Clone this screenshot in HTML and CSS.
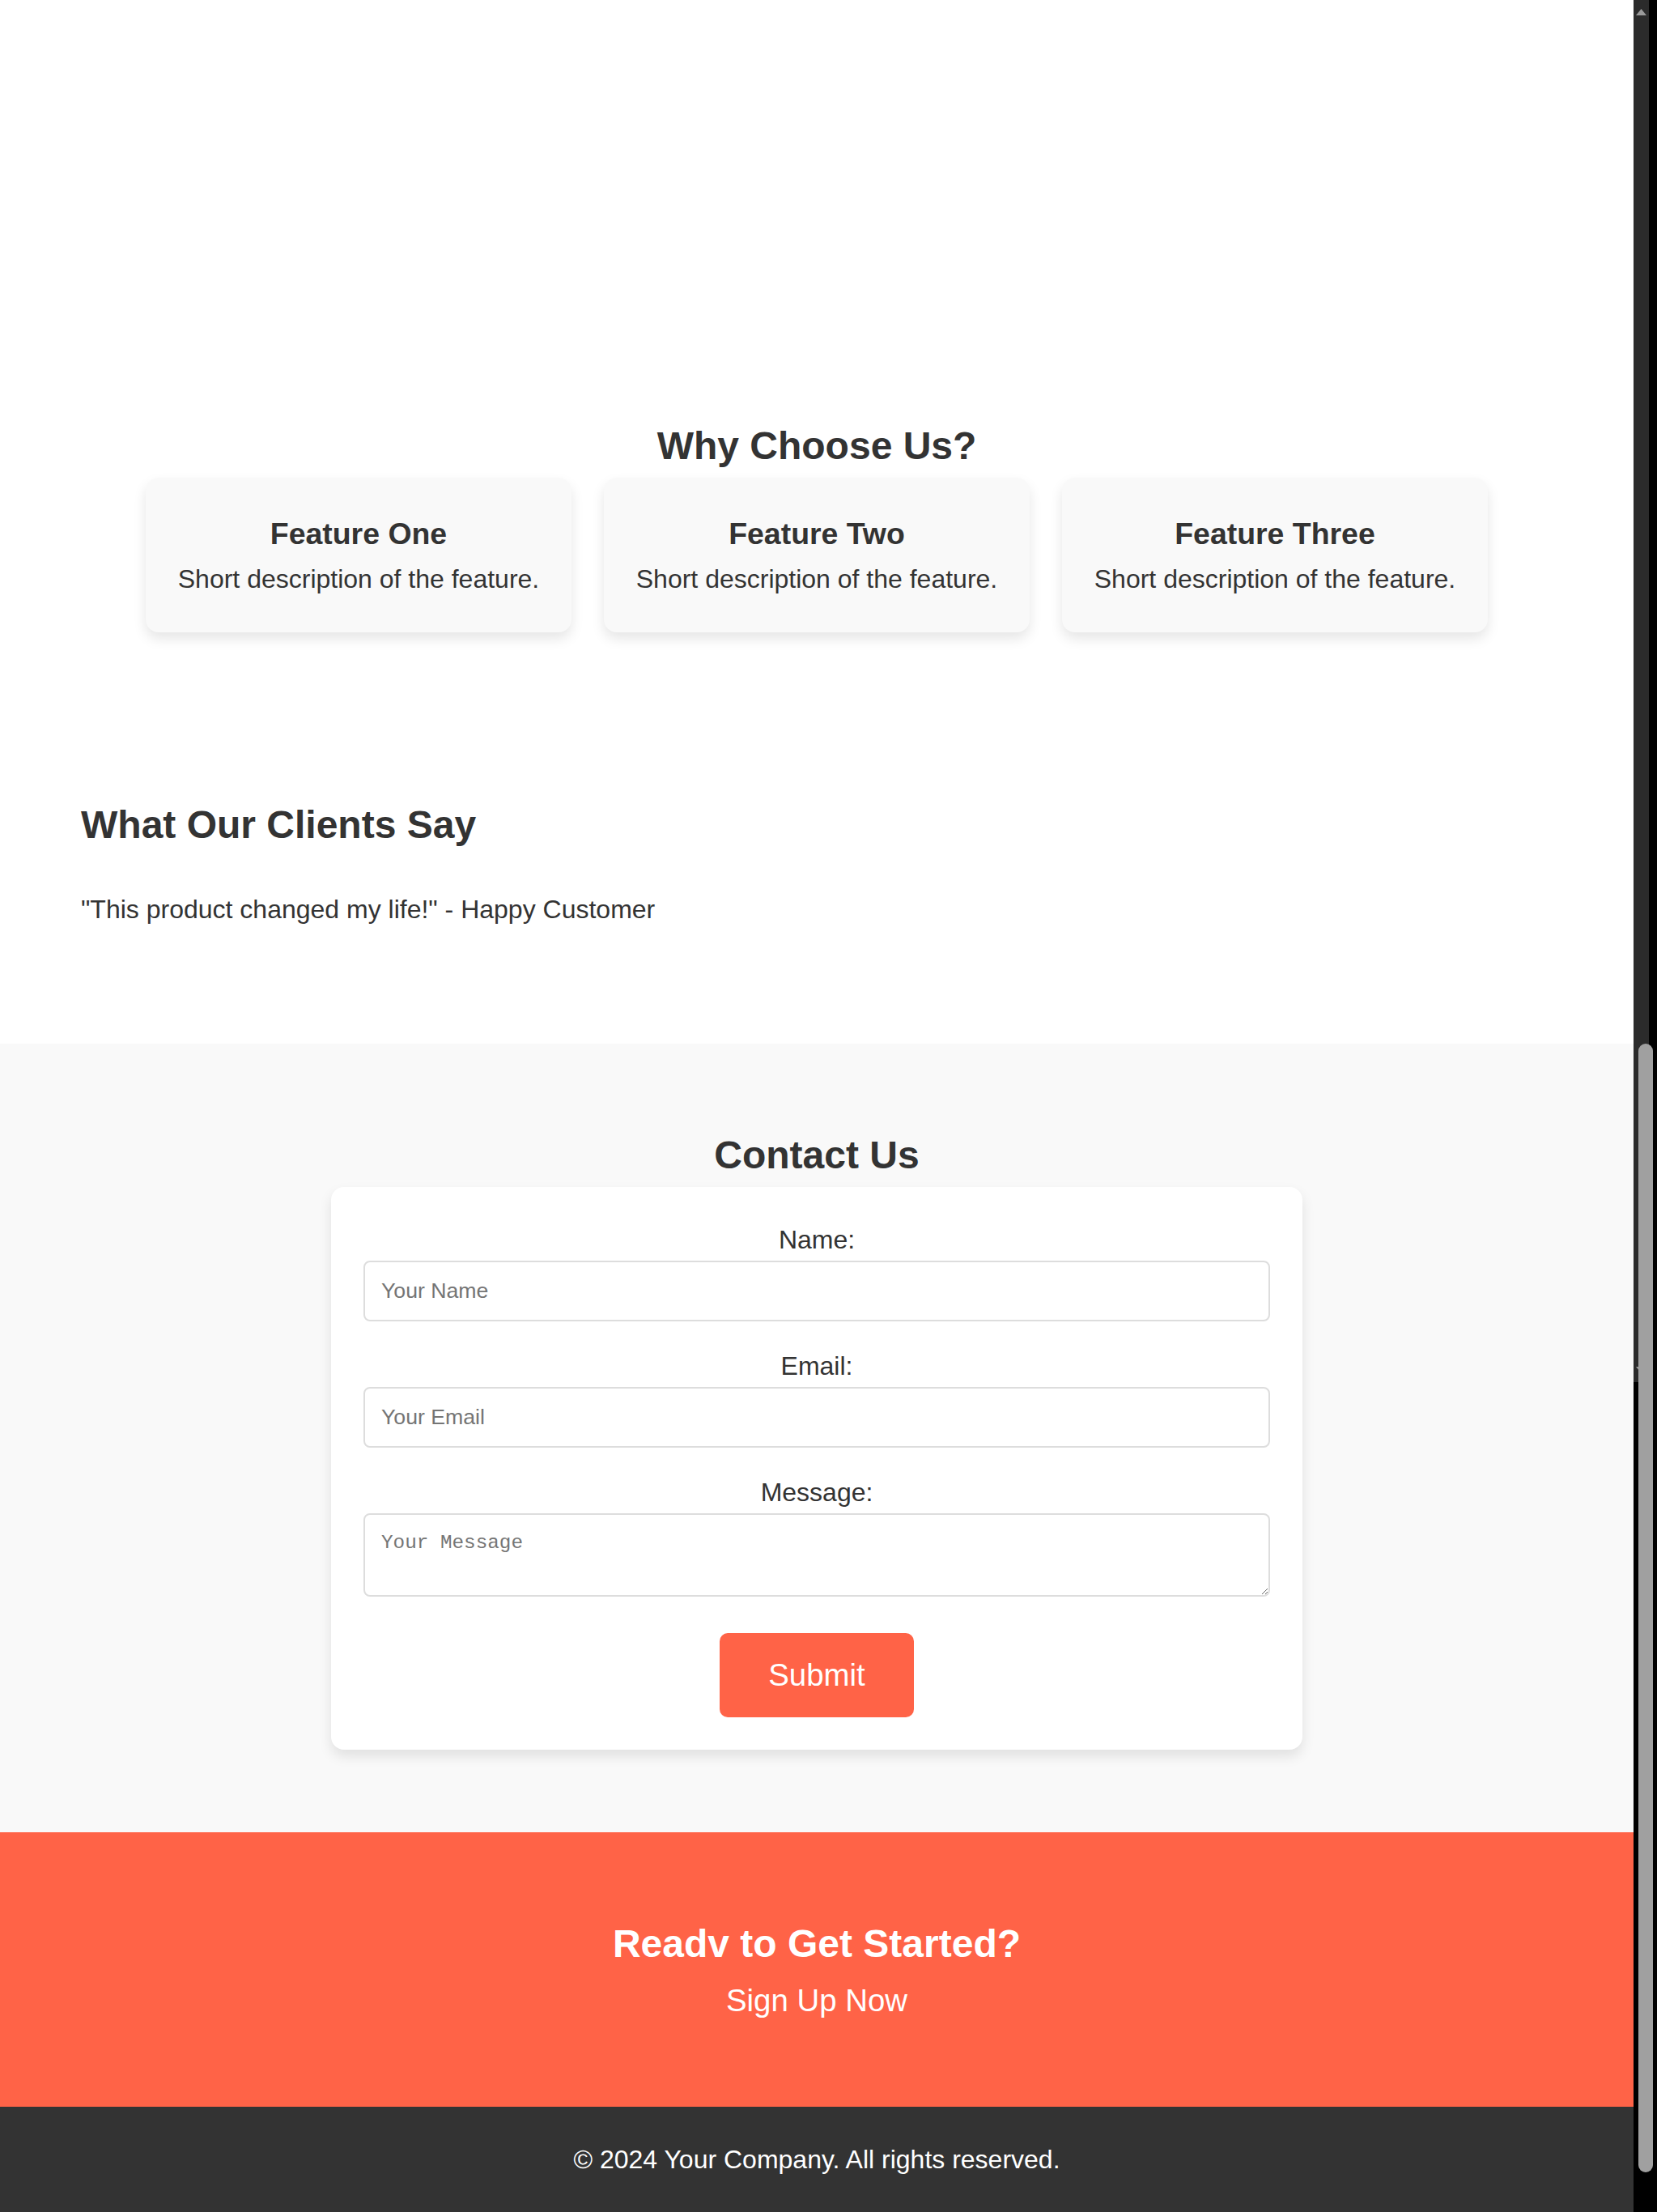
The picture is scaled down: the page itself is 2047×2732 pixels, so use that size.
FILE: index.html
```html
<!DOCTYPE html>
<html lang="en">
<head>
<meta charset="utf-8">
<title>Your Company</title>
<link rel="stylesheet" href="styles.css">
</head>
<body>
<div class="page">
  <main class="content">
    <div class="hero-tail"></div>

    <section class="features">
      <h2>Why Choose Us?</h2>
      <div class="feature-list">
        <div class="feature">
          <h3>Feature One</h3>
          <p>Short description of the feature.</p>
        </div>
        <div class="feature">
          <h3>Feature Two</h3>
          <p>Short description of the feature.</p>
        </div>
        <div class="feature">
          <h3>Feature Three</h3>
          <p>Short description of the feature.</p>
        </div>
      </div>
    </section>

    <section class="testimonials">
      <h2>What Our Clients Say</h2>
      <p>"This product changed my life!" - Happy Customer</p>
    </section>

    <section class="contact">
      <h2>Contact Us</h2>
      <form class="contact-form">
        <label for="name">Name:</label>
        <input type="text" id="name" placeholder="Your Name">
        <label for="email">Email:</label>
        <input type="email" id="email" placeholder="Your Email">
        <label for="message">Message:</label>
        <textarea id="message" placeholder="Your Message"></textarea>
        <button type="submit">Submit</button>
      </form>
    </section>

    <section class="cta">
      <h2>Readv to Get Started?</h2>
      <a href="#" class="cta-link">Sign Up Now</a>
    </section>

    <footer class="footer">
      <p>© 2024 Your Company. All rights reserved.</p>
    </footer>
  </main>

  <aside class="scrollbar" aria-hidden="true">
    <div class="scrollbar-track">
      <svg class="arrow arrow-up" width="19" height="10" viewBox="0 0 19 10"><polygon points="3,9 16,9 9.5,1" fill="#9a9a9a"/></svg>
      <svg class="arrow arrow-down" width="19" height="10" viewBox="0 0 19 10"><polygon points="3,1 16,1 9.5,9" fill="#9a9a9a"/></svg>
    </div>
    <div class="scrollbar-thumb"></div>
  </aside>
</div>
</body>
</html>
```

FILE: styles.css
```css
* {
  box-sizing: border-box;
}

html,
body {
  margin: 0;
  padding: 0;
}

body {
  font-family: "Liberation Sans", Arial, sans-serif;
  font-size: 32px;
  line-height: 1.6;
  color: #333;
  background: #fff;
  overflow: hidden;
}

.page {
  display: flex;
  height: 2732px;
  overflow: hidden;
}

.content {
  flex: 1;
  min-width: 0;
}

.hero-tail {
  height: 413px;
}

h2 {
  font-size: 48px;
  line-height: 76.8px;
  margin: 0;
}

/* Features */
.features {
  padding: 100px;
  text-align: center;
}

.feature-list {
  display: flex;
  justify-content: center;
  gap: 40px;
}

.feature {
  width: 526px;
  padding: 40px 20px;
  background: #f9f9f9;
  border-radius: 16px;
  box-shadow: 0 8px 16px rgba(0, 0, 0, 0.1);
}

.feature h3 {
  font-size: 37.44px;
  line-height: 59.9px;
  margin: 0;
}

.feature p {
  margin: 0;
}

/* Testimonials */
.testimonials {
  padding: 100px;
}

.testimonials p {
  margin: 40px 0;
}

/* Contact */
.contact {
  background: #f9f9f9;
  padding: 100px 40px 102px;
  text-align: center;
}

.contact-form {
  max-width: 1200px;
  margin: 0 auto;
  padding: 40px;
  background: #fff;
  border-radius: 16px;
  box-shadow: 0 8px 16px rgba(0, 0, 0, 0.1);
}

.contact-form label {
  display: block;
}

.contact-form input,
.contact-form textarea {
  display: block;
  width: 100%;
  margin: 0 0 30px;
  padding: 20px;
  border: 2px solid #ddd;
  border-radius: 8px;
  background: #fff;
  color: #333;
  text-align: left;
}

.contact-form input {
  font-family: "Liberation Sans", Arial, sans-serif;
  font-size: 26.67px;
  line-height: normal;
}

.contact-form textarea {
  font-family: "Liberation Mono", "DejaVu Sans Mono", monospace;
  font-size: 24.3px;
  line-height: 1.2;
  height: 103px;
  margin-bottom: 45px;
}

.contact-form input::placeholder,
.contact-form textarea::placeholder {
  color: #757575;
}

.contact-form button {
  display: block;
  margin: 0 auto;
  padding: 30px 60px;
  font-family: "Liberation Sans", Arial, sans-serif;
  font-size: 38.4px;
  line-height: normal;
  color: #fff;
  background: #ff6347;
  border: none;
  border-radius: 10px;
}

/* Call to action */
.cta {
  background: #ff6347;
  color: #fff;
  padding: 100px 40px 101px;
  text-align: center;
}

.cta-link {
  display: block;
  font-size: 38.4px;
  line-height: 61.44px;
  color: #fff;
  text-decoration: none;
}

/* Footer */
.footer {
  background: #333;
  color: #fff;
  padding: 40px 20px;
  text-align: center;
}

.footer p {
  margin: 0;
}

/* Scrollbar (as captured in the screenshot) */
.scrollbar {
  flex: none;
  width: 29px;
  background: #000;
  position: relative;
}

.scrollbar-track {
  width: 19px;
  height: 1707px;
  background: #2b2b2b;
  display: flex;
  flex-direction: column;
  justify-content: space-between;
  padding: 10px 0 10px;
}

.arrow {
  display: block;
}

.scrollbar-thumb {
  position: absolute;
  left: 6px;
  top: 1289px;
  width: 18px;
  height: 1394px;
  background: #a0a0a0;
  border-radius: 9px;
}
```
